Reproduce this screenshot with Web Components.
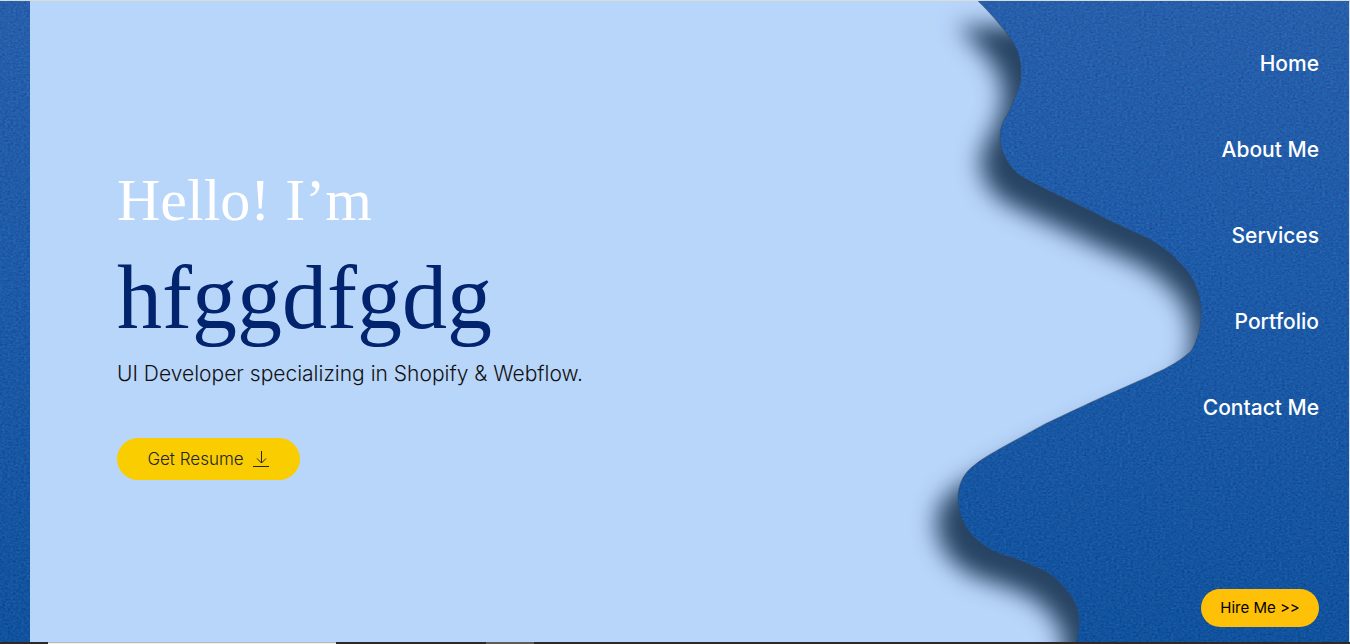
<!DOCTYPE html>
<html lang="en">
<head>
<meta charset="utf-8">
<meta name="viewport" content="width=device-width, initial-scale=1">
<title>Portfolio</title>
<style>
  body { margin: 0; font-family: Inter, "Open Sans", sans-serif; color: #111; }
</style>
</head>
<body>
<portfolio-page></portfolio-page>

<script>
const define = (name, html) => {
  const template = document.createElement('template');
  template.innerHTML = html;
  customElements.define(name, class extends HTMLElement {
    constructor() {
      super();
      this.attachShadow({ mode: 'open' }).append(template.content.cloneNode(true));
    }
  });
};

// Grain and vertical tint shared by both pieces of blue paper.
const paperDefs = `
  <linearGradient id="tint" x1="0" y1="0" x2="0" y2="641" gradientUnits="userSpaceOnUse">
    <stop offset="0" stop-color="#275fab"/>
    <stop offset=".45" stop-color="#1d5aa7"/>
    <stop offset="1" stop-color="#11529d"/>
  </linearGradient>
  <filter id="grain" x="0" y="0" width="100%" height="100%" color-interpolation-filters="sRGB">
    <feTurbulence type="fractalNoise" baseFrequency=".37 .53" numOctaves="4" seed="7"/>
    <feColorMatrix values=".8 .2 0 0 0  .2 .8 0 0 0  0 .5 .5 0 0  0 0 0 0 1" result="noise"/>
    <feComposite in="SourceGraphic" in2="noise" operator="arithmetic" k2="1" k3=".2" k4="-.1"/>
    <feComposite in2="SourceAlpha" operator="in"/>
  </filter>`;

// Cut edge of the paper, from top to bottom.
const edge = `M58 1 C66 9 73 16 80 25 C87 33 93 41 97 50 C100 58 101 65 101 72
  C101 81 99 89 95 97 C92 105 90 110 87 115 C82 122 80 130 80 138 C80 151 88 165 97 173
  C104 179 115 183 127 190 C148 200 168 209 188 220 L227 238 C240 245 251 253 260 263
  C267 270 272 277 275 285 C279 293 281 303 281 313 C281 322 280 329 278 335
  C275 343 274 348 270 352 C263 358 256 363 248 367 C242 371 236 372 230 376
  L187 395 C165 405 146 414 125 424 L83 447 C71 454 61 459 52 467 C42 475 38 487 38 499
  C38 513 44 526 53 536 C61 544 70 550 80 554 C96 558 112 565 127 572
  C135 577 142 584 147 591 C155 600 159 610 159 621 C159 629 158 635 156 642`;

define('paper-strip', `
  <style>
    :host { display: block; overflow: hidden; }
    svg { display: block; width: 100%; height: 100%; }
  </style>
  <svg viewBox="0 0 30 641" preserveAspectRatio="xMinYMin slice" aria-hidden="true">
    <defs>${paperDefs}</defs>
    <rect width="30" height="641" fill="url(#tint)" filter="url(#grain)"/>
  </svg>`);

define('paper-wave', `
  <style>
    :host { display: block; overflow: hidden; }
    svg { display: block; height: 100%; margin-left: auto; overflow: visible; }
  </style>
  <svg viewBox="0 1 429 641" preserveAspectRatio="xMaxYMin slice" aria-hidden="true">
    <defs>${paperDefs}
      <filter id="soft" x="-20%" y="-20%" width="140%" height="140%" color-interpolation-filters="sRGB"><feGaussianBlur stdDeviation="11"/></filter>
    </defs>
    <path d="${edge} V680 H500 V1 Z" transform="translate(-23 25) scale(1.05 1)" fill="#274363" filter="url(#soft)"/>
    <path d="${edge} H429 V1 Z" fill="url(#tint)" filter="url(#grain)"/>
    <path d="${edge}" fill="none" stroke="#35506c" stroke-opacity=".6"/>
  </svg>`);

define('pill-button', `
  <style>
    :host { display: block; }
    button {
      display: flex; align-items: center; justify-content: center; gap: 8px;
      box-sizing: border-box; width: 100%; height: var(--pill-height, 42px); padding: 0;
      border: 0; border-radius: 21px; background: var(--pill-color, #facd00);
      color: inherit; font: inherit; white-space: nowrap; cursor: pointer;
    }
  </style>
  <button type="button"><slot></slot></button>`);

define('hero-intro', `
  <style>
    :host { display: flex; flex-direction: column; align-items: flex-start; }
    h1, p { margin: 0; font-weight: 400; }
    h1 { font-family: "Liberation Serif", "Times New Roman", serif; }
    span { display: block; }
    .hello { color: #fff; font-size: 60px; line-height: 60px; margin-bottom: 23px; }
    .name { color: #02246e; font-size: 90px; line-height: 90px; margin-bottom: 16px; }
    p { font-size: 21px; line-height: 30px; font-weight: 300; margin-bottom: 49px; }
    pill-button { width: 183px; font-size: 17px; line-height: 24px; font-weight: 300; color: #212529; }
    svg { width: 18px; height: 18px; }
  </style>
  <h1><span class="hello">Hello! I’m</span><span class="name">hfggdfgdg</span></h1>
  <p>UI Developer specializing in Shopify &amp; Webflow.</p>
  <pill-button>Get Resume
    <svg viewBox="0 0 18 18" fill="none" stroke="#212529" aria-hidden="true">
      <path d="M9.500 1V13M5 8.500L9.500 13L14 8.500M1 16.500H17"/>
    </svg>
  </pill-button>`);

define('side-nav', `
  <style>
    :host { display: block; }
    ul { list-style: none; margin: 0; padding: 0; display: flex; flex-direction: column; align-items: flex-end; gap: 56px; }
    a { display: block; color: #fff; font-size: 21px; line-height: 30px; font-weight: 500; text-decoration: none; }
  </style>
  <nav aria-label="Main"><ul>
    <li><a href="#home">Home</a></li>
    <li><a href="#about">About Me</a></li>
    <li><a href="#services">Services</a></li>
    <li><a href="#portfolio">Portfolio</a></li>
    <li><a href="#contact">Contact Me</a></li>
  </ul></nav>`);

define('bottom-bar', `
  <style>
    :host { display: flex; height: 2px; background: #302826; }
    .field { width: 288px; margin-left: 48px; background: linear-gradient(#b9b9b7 50%, #f2efea 50%); }
    .active { width: 48px; margin-left: 150px; background: #625a56; }
  </style>
  <div class="field"></div><div class="active"></div>`);

define('portfolio-page', `
  <style>
    :host { display: flex; flex-direction: column; min-height: 100vh; box-sizing: border-box; border-top: 1px solid #d9dcda; }
    main {
      flex: 1; display: grid; grid-template-columns: 30px 1fr auto;
      background: #b8d5fa; border-right: 1px solid #d5e0ec;
    }
    paper-strip { grid-area: 1 / 1; }
    paper-wave { grid-area: 1 / 2 / 2 / 4; }
    paper-wave, paper-strip { contain: size; height: 0; min-height: 100%; }
    hero-intro { grid-area: 1 / 2; align-self: center; padding: 6px 0 0 87px; }
    aside {
      grid-area: 1 / 3; display: flex; flex-direction: column; align-items: flex-end;
      justify-content: space-between; gap: 32px; padding: 48px 30px 15px 0;
    }
    .hire { width: 118px; --pill-height: 38px; --pill-color: #ffc107; font-size: 15px; line-height: 24px; color: #000; }
    paper-wave, hero-intro, aside { min-width: 0; }
  </style>
  <main>
    <paper-strip></paper-strip>
    <paper-wave></paper-wave>
    <hero-intro></hero-intro>
    <aside>
      <side-nav></side-nav>
      <pill-button class="hire">Hire Me &gt;&gt;</pill-button>
    </aside>
  </main>
  <bottom-bar></bottom-bar>`);
</script>
</body>
</html>
